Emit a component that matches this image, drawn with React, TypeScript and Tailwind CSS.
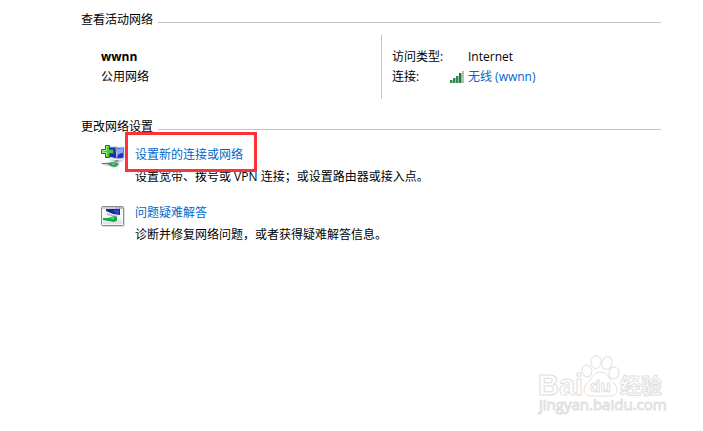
import type { ReactNode } from "react";

function SignalIcon() {
  return (
    <svg viewBox="0 0 14 12" className="h-3 w-3.5" aria-hidden="true">
      <path d="M2.5 9v3M5.5 7v5M8.5 5v7M11.5 2v10" stroke="#8cc49d" strokeWidth="1" />
      <rect x="0" y="9" width="2" height="3" fill="#2c8a4e" />
      <rect x="3" y="7" width="2" height="5" fill="#2c8a4e" />
      <rect x="6" y="5" width="2" height="7" fill="#2c8a4e" />
      <rect x="9" y="2" width="2" height="10" fill="#1f7a40" />
      <rect x="12" y="0" width="2" height="12" fill="#bdbdbd" />
    </svg>
  );
}

function NewConnectionIcon() {
  return (
    <svg viewBox="0 0 24 24" className="h-6 w-6" aria-hidden="true">
      {/* rear and front monitors */}
      <path d="M8 3l9 0v12l-9-2z" fill="#1b2bb0" stroke="#b9c2cf" />
      <path d="M15 4l8-1v11l-7 1z" fill="#1d2fd0" stroke="#c3cbd6" />
      <path d="M16 5l6-1v5c-3 0-5 1-6 4z" fill="#8ea6f2" />
      <path d="M9 15l7 1 7-1-1 2-5 2-7-2z" fill="#d0d5dc" />
      <path d="M14 16l4 0-1 2-4 0z" fill="#8d97a5" />
      {/* cable */}
      <path d="M0 19l9-1 8 0c3 1 2 4-1 5l-4 1c-2-2-7-2-12-4z" fill="#d3d8d6" />
      <path d="M1 19h7l3-1 6 1v2l-3 2-4-1-4-2h-5z" fill="#1fa648" />
      <path d="M10 19l5 1-3 1z" fill="#7fdc98" />
      {/* plus */}
      <path d="M4.5 1.5h4v4h4v4h-4v4h-4v-4h-4v-4h4z" fill="#4cc932" stroke="#187a1b" strokeLinejoin="round" />
      <path d="M5.5 12v-3.5h-4v-2h4v-4h2" fill="none" stroke="#a5ee88" />
    </svg>
  );
}

function TroubleshootIcon() {
  return (
    <svg viewBox="0 0 24 22" className="mt-1 h-[22px] w-6" aria-hidden="true">
      <rect x="1" y="2" width="23" height="19" rx="1" fill="#dedede" />
      <rect x="0.5" y="0.5" width="22" height="19" rx="1" fill="#f6f8f9" stroke="#858b92" />
      <path d="M1 1h21v2h-21z" fill="#c6ced8" />
      <path d="M15 2h1M18 2h1M20 2h1" stroke="#5b6470" />
      <path d="M5 3h8l6 0v6l-7-1-7-3z" fill="#1a2498" />
      <path d="M12 4l6 0v4l-4-1z" fill="#3048cc" />
      <path d="M6 7l6 2 6 1-3 1-9-2z" fill="#b4bcc6" />
      <path d="M2 12h5l6-2 3 1v4l-3 1-6-1-5-1z" fill="#19a94a" />
      <path d="M7 12l6-1v2z" fill="#6ddb8c" />
      <path d="M2 15l6 1h6l7-3v5h-19z" fill="#e0e5e7" />
    </svg>
  );
}

function Watermark() {
  return (
    <svg
      viewBox="0 0 132 62"
      className="h-[62px] w-[132px]"
      role="img"
      aria-label="Baidu 经验"
      fill="#ffffff"
      stroke="#e0e0e0"
      strokeWidth="1"
      strokeLinejoin="round"
    >
      <ellipse cx="50" cy="17" rx="5" ry="6" transform="rotate(-8 50 17)" />
      <ellipse cx="59" cy="8" rx="5" ry="6.5" />
      <ellipse cx="70" cy="9" rx="5" ry="6.5" transform="rotate(12 70 9)" />
      <ellipse cx="77" cy="19" rx="5" ry="6" transform="rotate(12 77 19)" />
      <path d="M64 18c-6 0-8 4-10 7-3 4-7 6-7 11 0 4 4 6 8 6h17c5 0 8-2 8-6 0-5-4-7-7-11-2-3-4-7-9-7z" />
      <g fontFamily="'Liberation Sans', Arial, sans-serif" fontWeight="bold">
        <text x="1" y="41" fontSize="29">Bai</text>
        <text x="53" y="38" fontSize="17">du</text>
      </g>
      <text x="83" y="39" fontSize="21" fontWeight="bold" fontFamily="'Noto Sans CJK SC', sans-serif">经验</text>
      <text x="2" y="56" fontSize="15" fontFamily="'Open Sans', sans-serif">jingyan.baidu.com</text>
    </svg>
  );
}

function SectionHeading({ children }: { children: ReactNode }) {
  return (
    <div className="flex items-center gap-[5px]">
      <h2 className="leading-5">{children}</h2>
      <span className="mt-1 h-px flex-1 bg-[#c6c6c6]" />
    </div>
  );
}

type TaskProps = {
  icon: ReactNode;
  title: string;
  description: string;
  highlighted?: boolean;
};

function Task({ icon, title, description, highlighted }: TaskProps) {
  return (
    <li className="flex gap-2.5">
      <div className="w-6 shrink-0">{icon}</div>
      <div className="leading-[22px]">
        <a href="#" className="relative inline-block text-[#0066cc] hover:underline">
          {title}
          {highlighted && (
            <span className="pointer-events-none absolute -top-3 -right-3.5 -bottom-1.5 -left-2.5 border-3 border-[#fb3236]" />
          )}
        </a>
        <p>{description}</p>
      </div>
    </li>
  );
}

export default function App() {
  return (
    <main className="bg-white pt-2.5 pr-[42px] pl-[81px] font-['Open_Sans','Noto_Sans_CJK_SC',sans-serif] text-xs text-black">
      <section>
        <SectionHeading>查看活动网络</SectionHeading>
        <div className="mt-[5px] grid grid-cols-2 pl-5 leading-5">
          <div className="py-3">
            <h3 className="font-bold">wwnn</h3>
            <p>公用网络</p>
          </div>
          <dl className="border-l border-[#c6c6c6] py-3 pl-2.5">
            <div className="flex">
              <dt className="w-[76px]">访问类型:</dt>
              <dd>Internet</dd>
            </div>
            <div className="flex">
              <dt className="w-14">连接:</dt>
              <dd>
                <a href="#" className="flex items-center text-[#0066cc] hover:underline">
                  <span className="w-5 pl-0.5">
                    <SignalIcon />
                  </span>
                  无线 (wwnn)
                </a>
              </dd>
            </div>
          </dl>
        </div>
      </section>

      <section className="mt-[18px]">
        <SectionHeading>更改网络设置</SectionHeading>
        <ul className="mt-[7px] flex flex-col gap-3.5 pl-5">
          <Task
            icon={<NewConnectionIcon />}
            title="设置新的连接或网络"
            description="设置宽带、拨号或 VPN 连接；或设置路由器或接入点。"
            highlighted
          />
          <Task
            icon={<TroubleshootIcon />}
            title="问题疑难解答"
            description="诊断并修复网络问题，或者获得疑难解答信息。"
          />
        </ul>
      </section>

      <footer className="-mr-2 mt-27 flex justify-end">
        <Watermark />
      </footer>
    </main>
  );
}
